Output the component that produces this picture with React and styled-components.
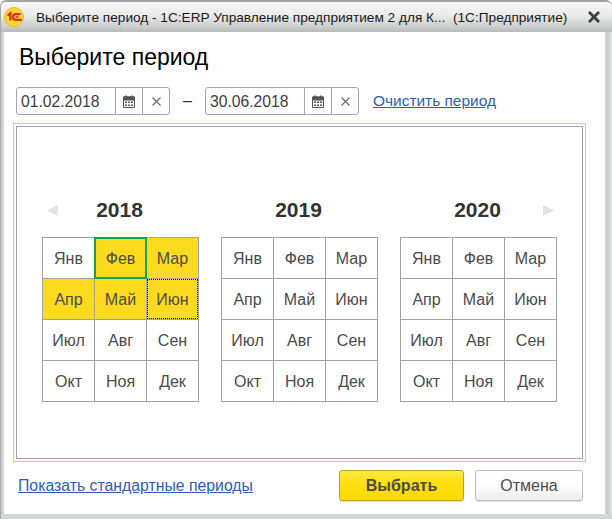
import React from 'react';
import styled, { createGlobalStyle } from 'styled-components';

const Global = createGlobalStyle`
  html, body { margin: 0; padding: 0; background: #fff; }
  body { font-family: "Liberation Sans", Arial, sans-serif; }
`;

const Page = styled.div`
  width: 612px;
  height: 519px;
  overflow: hidden;
  background: #fff;
`;

const Window = styled.div`
  box-sizing: border-box;
  width: 612px;
  height: 519px;
  display: flex;
  flex-direction: column;
  padding: 0 7px 5px 3px;
  border-top: 2px solid #a3a3a3;
  border-left: 1px solid #a8a8a8;
  border-radius: 6px 6px 0 0;
  background: linear-gradient(90deg, #c9cbcb 0, #d8d9d9 3px, #d8d9d9 calc(100% - 7px), #c8caca calc(100% - 5px), #e4e5e5 100%);
  box-shadow: inset 0 -5px 0 #d4d5d5;
`;

const TitleBar = styled.div`
  height: 30px;
  flex: none;
  margin: 0 -7px 0 -3px;
  padding: 0 12px 0 3px;
  display: flex;
  align-items: center;
  border-radius: 5px 5px 0 0;
  background: linear-gradient(180deg, #f7f7f7 0, #eaeaea 45%, #c9cbcb 85%, #b9bbbb 100%);
`;

const TitleText = styled.span`
  margin-left: 12px;
  font-size: 13.65px;
  color: #1a1a1a;
  white-space: pre;
  flex: 1;
`;

const Client = styled.div`
  flex: 1;
  display: flex;
  flex-direction: column;
  background: #fff;
  min-height: 0;
`;

const Heading = styled.h1`
  margin: 11px 0 0 15px;
  height: 28px;
  font-size: 23px;
  line-height: 28px;
  font-weight: 400;
  color: #000;
`;

const DateRow = styled.div`
  display: flex;
  align-items: center;
  margin: 16px 0 0 12px;
  height: 28px;
`;

const DateField = styled.div`
  box-sizing: border-box;
  width: 154px;
  height: 28px;
  display: flex;
  border: 1px solid #a6a6a6;
  border-radius: 3px;
  background: #fff;
`;

const DateValue = styled.span`
  flex: 1;
  padding-left: 4px;
  font-size: 15.7px;
  line-height: 27px;
  color: #3d3d3d;
`;

const FieldButton = styled.span`
  width: ${p => p.$w}px;
  flex: none;
  display: flex;
  align-items: center;
  justify-content: center;
  border-left: 1px solid #a6a6a6;
  color: #555;
`;

const Dash = styled.span`
  width: 35px;
  text-align: center;
  font-size: 16px;
  color: #333;
`;

const Link = styled.a`
  color: #2a5ebd;
  text-decoration: underline;
  font-size: 15.8px;
  cursor: pointer;
`;

const ClearLink = styled(Link)`
  margin-left: 14px;
  font-size: 15.45px;
`;

const FocusFrame = styled.div`
  box-sizing: border-box;
  width: 573px;
  height: 339px;
  margin: 8px 0 0 9px;
  padding: 2px;
  border: 1px solid #f4c84a;
`;

const Panel = styled.div`
  box-sizing: border-box;
  height: 100%;
  border: 1px solid #a3a3a3;
  display: flex;
  justify-content: center;
  gap: 22px;
  padding: 69px 0 0 0;
`;

const Calendar = styled.div`
  width: 157px;
`;

const YearHeader = styled.div`
  display: grid;
  grid-template-columns: 1fr auto 1fr;
  align-items: center;
  height: 28px;
  margin-bottom: 13px;
  padding: 0 6px 0 4px;
`;

const Year = styled.div`
  font-size: 21px;
  font-weight: 700;
  color: #333;
  text-align: center;
`;

const ArrowSlot = styled.span`
  display: flex;
  justify-content: ${p => (p.$right ? 'flex-end' : 'flex-start')};
  margin: ${p => (p.$right ? '0 -3px 0 0' : '0 0 0 1px')};
`;

const Grid = styled.div`
  display: grid;
  grid-template-columns: repeat(3, 52px);
  grid-auto-rows: 41px;
  border-top: 1px solid #a3a3a3;
  border-left: 1px solid #a3a3a3;
`;

const Month = styled.div`
  box-sizing: border-box;
  position: relative;
  display: flex;
  align-items: center;
  justify-content: center;
  padding-top: 1px;
  border-right: 1px solid #a3a3a3;
  border-bottom: 1px solid #a3a3a3;
  font-size: 16px;
  color: #4b4b4b;
  background: ${p => (p.$selected ? '#fcdb1f' : '#fff')};

  ${p => p.$start && `
    &::after {
      content: '';
      position: absolute;
      inset: -1px -1px -1px -1px;
      border: 2px solid #0aa84f;
    }
  `}

  ${p => p.$end && `
    &::after {
      content: '';
      position: absolute;
      inset: 0;
      border: 1px dotted #000;
    }
  `}
`;

const Footer = styled.div`
  display: flex;
  align-items: center;
  height: 31px;
  margin: 8px 0 0 14px;
`;

const FooterLink = styled(Link)`
  flex: 1;
`;

const Button = styled.button`
  box-sizing: border-box;
  height: 31px;
  padding: 1px 0 0;
  font-family: inherit;
  font-size: 16px;
  color: #4b4b4b;
  border-radius: 3px;
  border: 1px solid ${p => (p.$primary ? '#b8a21c' : '#bdbdbd')};
  font-weight: ${p => (p.$primary ? 700 : 400)};
  width: ${p => (p.$primary ? 125 : 108)}px;
  margin-right: ${p => (p.$primary ? 11 : 22)}px;
  background: ${p => (p.$primary
    ? 'linear-gradient(180deg, #ffe941 0, #ffdf0f 45%, #fdd800 100%)'
    : 'linear-gradient(180deg, #ffffff 0, #fdfdfd 55%, #ececec 100%)')};
  box-shadow: 0 1px 1px rgba(0,0,0,.12);
`;

const Logo = () => (
  <svg width="20" height="20" viewBox="0 0 20 20" aria-hidden="true">
    <circle cx="10" cy="10" r="9.5" fill="#fbd92a" stroke="#e8b820" strokeWidth="1" />
    <path d="M3.4 8.6 L6.4 6.4 V13.6" fill="none" stroke="#d6322a" strokeWidth="2.4" />
    <path d="M16.6 7.2 H11.8 A2.8 2.8 0 0 0 11.8 12.8 H18" fill="none" stroke="#d6322a" strokeWidth="2.2" />
    <path d="M11.5 10 H14.5" fill="none" stroke="#d6322a" strokeWidth="1.6" />
  </svg>
);

const CloseIcon = () => (
  <svg width="12" height="12" viewBox="0 0 12 12" aria-hidden="true">
    <path d="M1 1 L11 11 M11 1 L1 11" stroke="#3c3c3c" strokeWidth="2.8" />
  </svg>
);

const CalendarIcon = () => (
  <svg width="12" height="13" viewBox="0 0 12 13" aria-hidden="true">
    <path d="M0.5 2H11.5V12.5H0.5Z" fill="#fff" stroke="#555" />
    <path d="M0.5 2H11.5V5H0.5Z" fill="#555" stroke="#555" />
    <path d="M3 0.5V3M9 0.5V3" stroke="#555" strokeWidth="1.6" />
    <path d="M2 6.5h2v1.5h-2zM5 6.5h2v1.5h-2zM8 6.5h2v1.5h-2zM2 9.5h2v1.5h-2zM5 9.5h2v1.5h-2zM8 9.5h2v1.5h-2z" fill="#555" />
  </svg>
);

const ClearIcon = () => (
  <svg width="9" height="9" viewBox="0 0 9 9" aria-hidden="true">
    <path d="M0.5 0.5 L8.5 8.5 M8.5 0.5 L0.5 8.5" stroke="#666" strokeWidth="1.1" />
  </svg>
);

const Arrow = ({ right }) => (
  <svg width="11" height="11" viewBox="0 0 11 11" aria-hidden="true">
    <path d={right ? 'M0 0 L11 5.5 L0 11 Z' : 'M11 0 L0 5.5 L11 11 Z'} fill="#e1e4e7" />
  </svg>
);

const MONTHS = ['Янв', 'Фев', 'Мар', 'Апр', 'Май', 'Июн', 'Июл', 'Авг', 'Сен', 'Окт', 'Ноя', 'Дек'];

const DateInput = ({ value }) => (
  <DateField>
    <DateValue>{value}</DateValue>
    <FieldButton $w={26}><CalendarIcon /></FieldButton>
    <FieldButton $w={26}><ClearIcon /></FieldButton>
  </DateField>
);

const YearCalendar = ({ year, prev, next, from, to }) => (
  <Calendar>
    <YearHeader>
      <ArrowSlot>{prev && <Arrow />}</ArrowSlot>
      <Year>{year}</Year>
      <ArrowSlot $right>{next && <Arrow right />}</ArrowSlot>
    </YearHeader>
    <Grid>
      {MONTHS.map((m, i) => (
        <Month
          key={m}
          $selected={from !== undefined && i >= from && i <= to}
          $start={i === from}
          $end={i === to}
        >
          {m}
        </Month>
      ))}
    </Grid>
  </Calendar>
);

export default function App() {
  return (
    <Page>
      <Global />
      <Window>
        <TitleBar>
          <Logo />
          <TitleText>{'Выберите период - 1С:ERP Управление предприятием 2 для К...  (1С:Предприятие)'}</TitleText>
          <CloseIcon />
        </TitleBar>
        <Client>
          <Heading>Выберите период</Heading>
          <DateRow>
            <DateInput value="01.02.2018" />
            <Dash>–</Dash>
            <DateInput value="30.06.2018" />
            <ClearLink>Очистить период</ClearLink>
          </DateRow>
          <FocusFrame>
            <Panel>
              <YearCalendar year="2018" prev from={1} to={5} />
              <YearCalendar year="2019" />
              <YearCalendar year="2020" next />
            </Panel>
          </FocusFrame>
          <Footer>
            <FooterLink>Показать стандартные периоды</FooterLink>
            <Button $primary>Выбрать</Button>
            <Button>Отмена</Button>
          </Footer>
        </Client>
      </Window>
    </Page>
  );
}
